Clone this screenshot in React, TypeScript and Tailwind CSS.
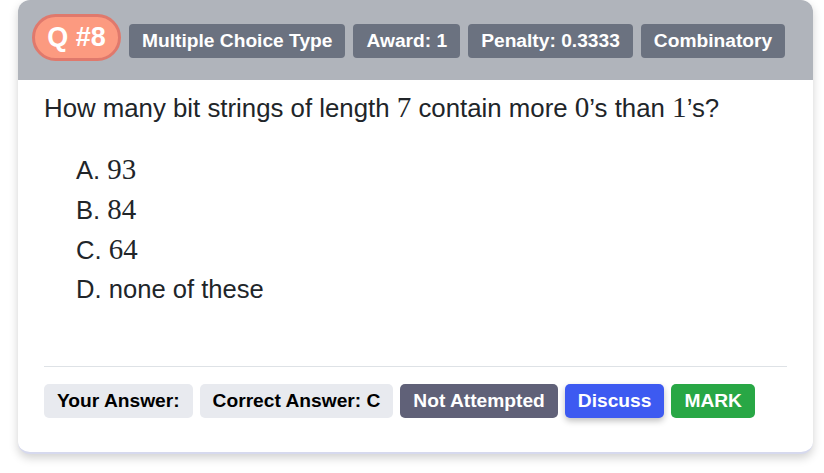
import React from "react";

const tags = ["Multiple Choice Type", "Award: 1", "Penalty: 0.3333", "Combinatory"];
const options = [
  { key: "A", math: "93" },
  { key: "B", math: "84" },
  { key: "C", math: "64" },
  { key: "D", text: "none of these" },
];

const M = ({ children }: { children: React.ReactNode }) => (
  <span className="font-['Liberation_Serif',serif] text-[1.13em]">{children}</span>
);

const App = () => {
  return (
    <div className="min-h-[473px] bg-white px-[18px] font-['Liberation_Sans',Arial,sans-serif]">
      <div className="w-[795px] overflow-hidden rounded-[12px] border-b-2 border-[#d6d9ee] bg-white shadow-[0_4px_10px_rgba(0,0,0,0.18)]">
        <div className="flex h-[80px] items-start gap-2 bg-[#b0b4bb] px-[14px] pt-[14px]">
          <div className="flex h-[47px] w-[89px] items-center justify-center rounded-full border-[3px] border-[#e0796c] bg-[#fc9a80] text-[27px] font-bold text-white">
            Q #8
          </div>
          {tags.map((t) => (
            <span
              key={t}
              className="mt-[10px] flex h-[34px] items-center rounded-[4px] bg-[#6b7280] px-[13px] text-[19.2px] font-bold text-white"
            >
              {t}
            </span>
          ))}
        </div>
        <div className="px-[26px] pb-[34px] pt-[11px] text-[#212529]">
          <p className="text-[25.8px] leading-[32px]">
            How many bit strings of length <M>7</M> contain more <M>0</M>’s than <M>1</M>’s?
          </p>
          <ul className="mt-[26px] flex flex-col pl-8 text-[25.6px] leading-[39px]">
            {options.map((o) => (
              <li key={o.key}>
                {o.key}. {o.math ? <M>{o.math}</M> : o.text}
              </li>
            ))}
          </ul>
          <div className="mt-[57px] border-t border-[#dee2e6]" />
          <div className="mt-[17px] flex gap-[7px] text-[19.2px] font-bold">
            <span className="flex h-[34px] items-center rounded-[5px] bg-[#e8eaef] px-[13px] text-black">Your Answer:</span>
            <span className="flex h-[34px] items-center rounded-[5px] bg-[#e8eaef] px-[13px] text-black">Correct Answer: C</span>
            <span className="flex h-[34px] items-center rounded-[5px] bg-[#606178] px-[13px] text-white">Not Attempted</span>
            <button className="flex h-[34px] items-center rounded-[5px] bg-[#3d5af1] px-[13px] text-white shadow-[0_3px_6px_rgba(0,0,0,0.25)]">Discuss</button>
            <button className="flex h-[34px] items-center rounded-[5px] bg-[#28a745] px-[13px] text-white">MARK</button>
          </div>
        </div>
      </div>
    </div>
  );
};

export default App;
